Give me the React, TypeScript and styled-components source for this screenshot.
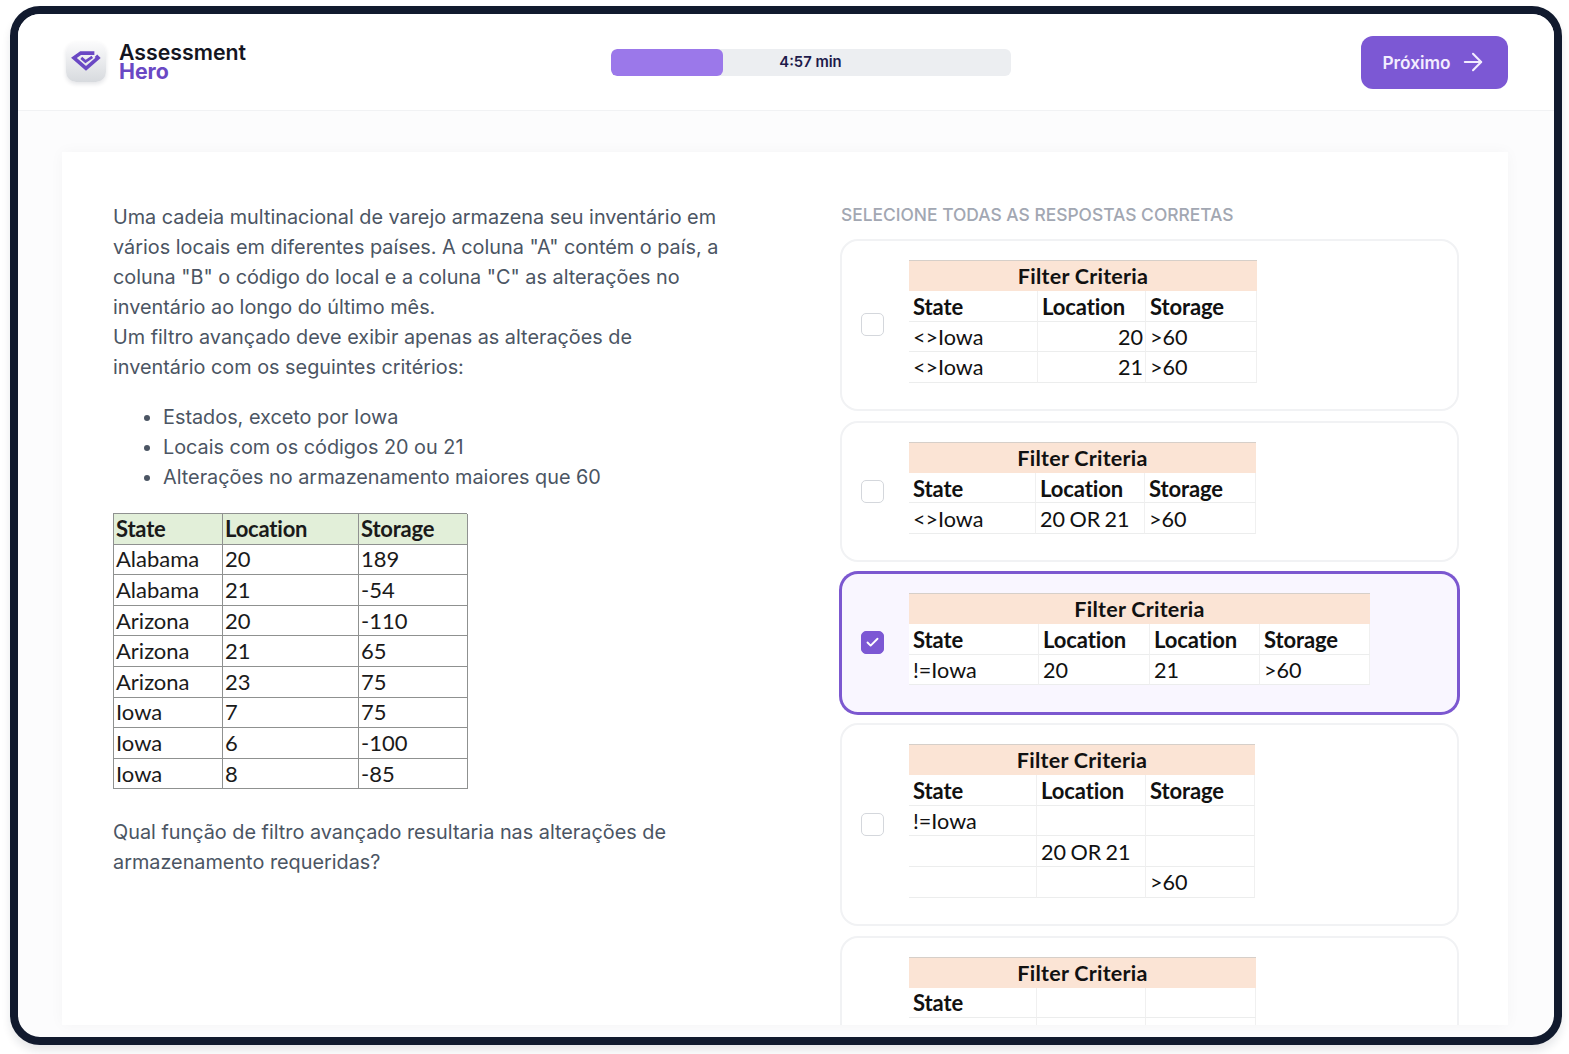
import React from "react";
import styled, { createGlobalStyle } from "styled-components";
import { ArrowRight, Check } from "lucide-react";

const Global = createGlobalStyle`
  html, body { margin: 0; padding: 0; background: #fff; }
  * { box-sizing: border-box; }
  body { font-family: Inter, "Liberation Sans", sans-serif; }
`;

const Page = styled.div`
  width: 100vw;
  height: 100vh;
  padding: 6px 7px 9px 10px;
  overflow: hidden;
`;
const Frame = styled.div`
  height: 100%;
  display: flex;
  flex-direction: column;
  border: 8px solid #111a2e;
  border-radius: 30px;
  overflow: hidden;
  background: #fcfcfd;
  box-shadow: 0 6px 8px rgba(17, 26, 46, 0.1);
`;
const Header = styled.header`
  height: 97px;
  flex: none;
  display: flex;
  align-items: center;
  justify-content: space-between;
  padding: 0 46px 0 48px;
  background: #fff;
  border-bottom: 1px solid #f1f2f4;
`;
const Brand = styled.div`
  width: 194px;
  display: flex;
  align-items: center;
  gap: 13px;
`;
const LogoTile = styled.div`
  width: 40px;
  height: 40px;
  flex: none;
  display: flex;
  align-items: center;
  justify-content: center;
  padding-bottom: 2px;
  border-radius: 10px;
  background: linear-gradient(180deg, #fbfbfc 0%, #d7dade 100%);
  box-shadow: 0 2px 4px rgba(17, 26, 46, 0.12);
`;
const BrandText = styled.div`
  display: flex;
  flex-direction: column;
  font-size: 21.3px;
  line-height: 19px;
`;
const BrandTop = styled.span`
  font-weight: 600;
  color: #14151f;
`;
const BrandBottom = styled.span`
  font-weight: 700;
  color: #6a48c4;
`;
const Progress = styled.div`
  position: relative;
  width: 400px;
  height: 27px;
  display: flex;
  align-items: center;
  justify-content: center;
  border-radius: 6px;
  background: #eceef1;
  overflow: hidden;
  font-size: 14.8px;
  font-weight: 600;
  color: #1e1b4b;
`;
const ProgressFill = styled.div`
  position: absolute;
  left: 0;
  top: 0;
  bottom: 0;
  border-radius: 6px;
  background: #9b78ea;
`;
const ProgressLabel = styled.span`
  position: relative;
`;
const NextButton = styled.button`
  width: 147px;
  height: 53px;
  display: flex;
  align-items: center;
  justify-content: center;
  gap: 8px;
  padding: 0;
  border: 0;
  border-radius: 12px;
  background: #7c58d4;
  color: #f3edff;
  font-family: inherit;
  font-size: 17.3px;
  font-weight: 600;
`;
const Main = styled.main`
  flex: 1;
  min-height: 0;
  padding: 41px 46px 12px 44px;
`;
const Sheet = styled.section`
  height: 100%;
  overflow: hidden;
  display: grid;
  grid-template-columns: 610px 619px;
  column-gap: 117px;
  padding: 50px 49px 0 51px;
  background: #fff;
  box-shadow: 0 0 14px rgba(17, 26, 46, 0.035);
`;
const LeftColumn = styled.div`
  font-size: 19.84px;
  line-height: 30px;
  color: #4b5563;
`;
const Paragraph = styled.p`
  margin: 0;
`;
const Bullets = styled.ul`
  margin: 20px 0 21px;
  padding: 0 0 0 50px;
`;
const Bullet = styled.li`
  padding: 0;
`;
const DataGrid = styled.div`
  width: 354px;
  display: grid;
  grid-template-columns: 109px 136px 109px;
  border-top: 1px solid #8f9190;
  border-left: 1px solid #8f9190;
  margin-bottom: 28px;
  font-family: Lato, "Liberation Sans", sans-serif;
  color: #1a1a1a;
`;
const DataCell = styled.div<{ $head?: boolean }>`
  height: 30.6px;
  padding: 0 2px;
  display: flex;
  align-items: center;
  font-size: 22px;
  font-weight: ${(p) => (p.$head ? 700 : 400)};
  letter-spacing: ${(p) => (p.$head ? "-0.2px" : "0")};
  background: ${(p) => (p.$head ? "#e2efd9" : "#fff")};
  border-right: 1px solid #8f9190;
  border-bottom: 1px solid #8f9190;
`;
const RightColumn = styled.div`
  min-width: 0;
`;
const Prompt = styled.h2`
  margin: 0 0 11px;
  font-size: 17.4px;
  line-height: 26px;
  font-weight: 500;
  color: #a2a7b2;
  padding-left: 1px;
`;
const Options = styled.div`
  display: flex;
  flex-direction: column;
  gap: 9.5px;
`;
const Option = styled.div<{ $selected?: boolean }>`
  flex: none;
  display: flex;
  align-items: center;
  gap: 25px;
  padding: 19px 20px 26.5px 19px;
  border: 2px solid ${(p) => (p.$selected ? "#7c58d0" : "#f1f2f4")};
  border-radius: 18px;
  background: ${(p) => (p.$selected ? "#f9f6ff" : "#fff")};
  box-shadow: ${(p) => (p.$selected ? "0 0 0 1px #7c58d0" : "none")};
`;
const Box = styled.div<{ $checked?: boolean }>`
  width: 23px;
  height: 23px;
  flex: none;
  margin-top: 7px;
  display: flex;
  align-items: center;
  justify-content: center;
  border-radius: 5px;
  border: 1.5px solid ${(p) => (p.$checked ? "#7c58d4" : "#d4d7dc")};
  background: ${(p) => (p.$checked ? "#7c58d4" : "#fff")};
  color: #fff;
`;
const Criteria = styled.div<{ $cols: string }>`
  display: grid;
  grid-template-columns: ${(p) => p.$cols};
  font-family: Lato, "Liberation Sans", sans-serif;
  color: #111;
  background: #fff;
`;
const CriteriaTitle = styled.div`
  grid-column: 1 / -1;
  height: 31px;
  display: flex;
  align-items: center;
  justify-content: center;
  border-top: 1px solid #d6cfc9;
  background: #fbe4d5;
  font-size: 21.5px;
  font-weight: 700;
  letter-spacing: 0.25px;
`;
const CriteriaCell = styled.div<{ $head?: boolean; $right?: boolean }>`
  height: 30.6px;
  padding: ${(p) => (p.$right ? "1px 2px 0 4px" : "1px 5px 0 4px")};
  display: flex;
  align-items: center;
  justify-content: ${(p) => (p.$right ? "flex-end" : "flex-start")};
  font-size: ${(p) => (p.$head ? "22px" : "21.6px")};
  font-weight: ${(p) => (p.$head ? 700 : 400)};
  letter-spacing: ${(p) => (p.$head ? "-0.1px" : "0")};
  word-spacing: -1.2px;
  border-bottom: 1px solid #eceded;
  border-right: 1px solid #f0f0f0;
  white-space: nowrap;
`;

const Logo = () => (
  <svg width="32" height="22" viewBox="0 0 30 21" fill="none">
    <path d="M23 3 H10 L3.5 7.5 L15 17.5 L26.5 7.5 L24.5 5.5" stroke="#6a48c4" strokeWidth="3.4" strokeLinejoin="miter" fill="none" />
    <path d="M10.5 7.5 L14.5 11 L21 6.5" stroke="#6a48c4" strokeWidth="2.6" fill="none" />
  </svg>
);

type Table = { cols: string; rows: string[][]; right?: number[] };

const stateRows = [
  ["Alabama", "20", "189"],
  ["Alabama", "21", "-54"],
  ["Arizona", "20", "-110"],
  ["Arizona", "21", "65"],
  ["Arizona", "23", "75"],
  ["Iowa", "7", "75"],
  ["Iowa", "6", "-100"],
  ["Iowa", "8", "-85"],
];

const tables: (Table & { selected?: boolean })[] = [
  {
    cols: "129px 108px 111px",
    right: [1],
    rows: [
      ["State", "Location", "Storage"],
      ["<>Iowa", "20", ">60"],
      ["<>Iowa", "21", ">60"],
    ],
  },
  {
    cols: "127px 109px 111px",
    rows: [
      ["State", "Location", "Storage"],
      ["<>Iowa", "20 OR 21", ">60"],
    ],
  },
  {
    cols: "130px 111px 110px 110px",
    selected: true,
    rows: [
      ["State", "Location", "Location", "Storage"],
      ["!=Iowa", "20", "21", ">60"],
    ],
  },
  {
    cols: "128px 109px 109px",
    rows: [
      ["State", "Location", "Storage"],
      ["!=Iowa", "", ""],
      ["", "20 OR 21", ""],
      ["", "", ">60"],
    ],
  },
  {
    cols: "128px 109px 110px",
    rows: [
      ["State", "", ""],
      ["", "", ""],
      ["", "", ""],
      ["", "", ""],
      ["", "", ""],
    ],
  },
];

export default function App() {
  return (
    <Page>
      <Global />
      <Frame>
        <Header>
          <Brand>
            <LogoTile>
              <Logo />
            </LogoTile>
            <BrandText>
              <BrandTop>Assessment</BrandTop>
              <BrandBottom>Hero</BrandBottom>
            </BrandText>
          </Brand>
          <Progress>
            <ProgressFill style={{ width: "28%" }} />
            <ProgressLabel>4:57 min</ProgressLabel>
          </Progress>
          <NextButton>
            Próximo
            <ArrowRight size={28} strokeWidth={1.8} />
          </NextButton>
        </Header>
        <Main>
          <Sheet>
            <LeftColumn>
              <Paragraph>
                Uma cadeia multinacional de varejo armazena seu inventário em vários locais em diferentes países. A coluna "A" contém o país, a coluna "B" o código do local e a coluna "C" as alterações no inventário ao longo do último mês.
                <br />
                Um filtro avançado deve exibir apenas as alterações de inventário com os seguintes critérios:
              </Paragraph>
              <Bullets>
                <Bullet>Estados, exceto por Iowa</Bullet>
                <Bullet>Locais com os códigos 20 ou 21</Bullet>
                <Bullet>Alterações no armazenamento maiores que 60</Bullet>
              </Bullets>
              <DataGrid>
                {["State", "Location", "Storage"].map((h) => (
                  <DataCell $head key={h}>{h}</DataCell>
                ))}
                {stateRows.flat().map((c, i) => (
                  <DataCell key={i}>{c}</DataCell>
                ))}
              </DataGrid>
              <Paragraph>Qual função de filtro avançado resultaria nas alterações de armazenamento requeridas?</Paragraph>
            </LeftColumn>
            <RightColumn>
              <Prompt>SELECIONE TODAS AS RESPOSTAS CORRETAS</Prompt>
              <Options>
                {tables.map((t, i) => (
                  <Option $selected={t.selected} key={i}>
                    <Box $checked={t.selected}>{t.selected && <Check size={15} strokeWidth={3} />}</Box>
                    <Criteria $cols={t.cols}>
                      <CriteriaTitle>Filter Criteria</CriteriaTitle>
                      {t.rows.map((r, ri) =>
                        r.map((c, ci) => (
                          <CriteriaCell key={`${ri}-${ci}`} $head={ri === 0} $right={ri > 0 && t.right?.includes(ci)}>
                            {c}
                          </CriteriaCell>
                        ))
                      )}
                    </Criteria>
                  </Option>
                ))}
              </Options>
            </RightColumn>
          </Sheet>
        </Main>
      </Frame>
    </Page>
  );
}
